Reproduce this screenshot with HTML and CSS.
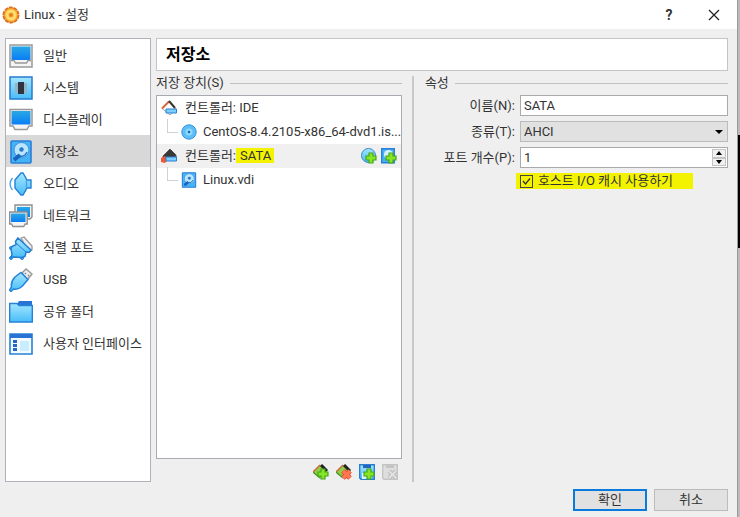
FILE: index.html
```html
<!DOCTYPE html>
<html lang="ko">
<head>
  <meta charset="UTF-8">
  <title>Linux - 설정</title>
  <link rel="stylesheet" href="styles.css">
</head>
<body>

<svg class="defs" width="0" height="0" aria-hidden="true">
  <defs>
    <linearGradient id="screen" x1="0" y1="0" x2="0" y2="1"><stop offset="0" stop-color="#28a8e6"/><stop offset="1" stop-color="#0a7df5"/></linearGradient>
    <linearGradient id="sky" x1="0" y1="0" x2="0" y2="1"><stop offset="0" stop-color="#a5e6ff"/><stop offset="1" stop-color="#48bdf8"/></linearGradient>
    <symbol id="plus" viewBox="0 0 12 12"><path d="M4 1h4v3h3v4H8v3H4V8H1V4h3z" fill="#86e626" stroke="#45a51c" stroke-width="1.2"/></symbol>
    <symbol id="disk" viewBox="0 0 24 24">
      <rect x="2" y="1" width="20" height="22" rx="1" fill="#45b4f6" stroke="#2b7fd6" stroke-width="1.6"/>
      <circle cx="12.500" cy="10" r="7.500" fill="#b9e6fc" stroke="#3a90e0"/>
      <circle cx="12.500" cy="9.500" r="2.200" fill="#2a78cc"/>
      <path d="M18 12q-2 5-7 4" fill="none" stroke="#2a78cc" stroke-width="1.500"/>
      <path d="M11 15l-6 5" fill="none" stroke="#1b62bd" stroke-width="4"/>
    </symbol>
  </defs>
</svg>

<div class="window">
  <header class="titlebar">
    <svg class="gear" viewBox="0 0 18 18">
      <circle cx="9" cy="9" r="7.500" fill="#f79a28" stroke="#d9701f" stroke-width="2" stroke-dasharray="3.900 .8"/>
      <circle cx="9" cy="9" r="6.700" fill="#fba930"/>
      <circle cx="9" cy="9" r="4" fill="none" stroke="#ffdc70" stroke-width="3"/>
      <circle cx="9" cy="9" r="1.800" fill="#e07c22"/>
    </svg>
    <h1 class="title">Linux - 설정</h1>
    <button class="title-btn" type="button" aria-label="도움말">?</button>
    <button class="title-btn" type="button" aria-label="닫기">
      <svg width="12" height="12" viewBox="0 0 12 12"><path d="M1 1l10 10M11 1L1 11" stroke="#222" stroke-width="1.300"/></svg>
    </button>
  </header>

  <div class="content">
    <nav class="sidebar">
      <a class="nav-item" href="#general">
        <svg class="nav-icon" viewBox="0 0 24 24"><path d="M1 1h22v22H1z" fill="#f4f4f4" stroke="#999" stroke-width="1.500"/><path d="M2.500 2.500h19V16h-19z" fill="url(#screen)"/><path d="M2 16.500h3l1.500 2.500h11l1.500-2.500h3" fill="none" stroke="#999" stroke-width="1.300"/></svg>
        일반</a>
      <a class="nav-item" href="#system">
        <svg class="nav-icon" viewBox="0 0 24 24"><path d="M1 1h22v22H1z" fill="url(#sky)" stroke="#267bd2" stroke-width="1.500"/><path d="M6 7h12v10H6z" fill="#91b5c6"/><path d="M9 6h6v12H9z" fill="#303440"/></svg>
        시스템</a>
      <a class="nav-item" href="#display">
        <svg class="nav-icon" viewBox="0 0 24 24"><path d="M1 1.500h22V18h-3l-2 3.500H6L4 18H1z" fill="#f4f4f4" stroke="#999" stroke-width="1.500"/><path d="M2.500 3h19v13.500h-19z" fill="url(#screen)"/></svg>
        디스플레이</a>
      <a class="nav-item selected" href="#storage">
        <svg class="nav-icon"><use href="#disk"/></svg>
        저장소</a>
      <a class="nav-item" href="#audio">
        <svg class="nav-icon" viewBox="0 0 24 24"><path d="M6 8l6-7h2l4 7h4v8h-4l-4 7h-2l-6-7z" fill="url(#sky)" stroke="#2583d7" stroke-width="1.400"/><path d="M17.500 8v8M3.500 6q-5 6 0 12" fill="none" stroke="#4a9fe4" stroke-width="1.300"/></svg>
        오디오</a>
      <a class="nav-item" href="#network">
        <svg class="nav-icon" viewBox="0 0 24 24"><path d="M6 1h17v12l-2 2H6z" fill="#f4f4f4" stroke="#8f8f8f" stroke-width="1.400"/><path d="M8 3h13v10H8z" fill="url(#screen)"/><path d="M.7 8h17.500v12h-2l-1.500 2.500H4L2.500 20H.7z" fill="#f4f4f4" stroke="#8f8f8f" stroke-width="1.400"/><path d="M2 9.500h14.500V18H2z" fill="url(#screen)"/></svg>
        네트워크</a>
      <a class="nav-item" href="#serial">
        <svg class="nav-icon" viewBox="0 0 24 24">
          <path d="M12 2l3-1 8 9v4l-3 2z" fill="#eee" stroke="#999" stroke-width="1.300"/>
          <g fill="#52bdf7" stroke="#227dd3"><circle cx="2" cy="12" r="1.500"/><circle cx="13" cy="22" r="1.500"/><circle cx="2" cy="22" r="1.500"/></g>
          <path d="M9 2l13 12-2 2.500-3-.5-1 4.500-3 1-8-.5-3 .5 1-3-1-6 1-2 4-2-.500-3z" fill="url(#sky)" stroke="#227dd3" stroke-width="1.500"/>
          <path d="M7 7l10 9" stroke="#227dd3"/>
        </svg>
        직렬 포트</a>
      <a class="nav-item" href="#usb">
        <svg class="nav-icon" viewBox="0 0 24 24"><path d="M13 5l4-4 6 5-5 6z" fill="#eee" stroke="#999" stroke-width="1.400"/><path d="M16 5l1 1M19 7l1 1" stroke="#888" stroke-width="1.500"/><path d="M12 4.500l7 7-6 7q-4 3.500-8.500 2.500L2 23.500.5 22 2.500 19Q1.500 14 6 9z" fill="url(#sky)" stroke="#2583d7" stroke-width="1.500"/></svg>
        USB</a>
      <a class="nav-item" href="#shared">
        <svg class="nav-icon" viewBox="0 0 24 24"><path d="M8 4l2-3h13v4H8z" fill="#2873d3"/><path d="M.7 3.500H8l2 2h13.300V22H.7z" fill="url(#sky)" stroke="#2583d7" stroke-width="1.400"/></svg>
        공유 폴더</a>
      <a class="nav-item" href="#ui">
        <svg class="nav-icon" viewBox="0 0 24 24"><path d="M1 2h22v20H1z" fill="#f3fbff" stroke="#2583d7" stroke-width="1.600"/><path d="M1 2h22v4H1z" fill="#2873d3"/><path d="M11 9h9v10h-9z" fill="#c9edfd"/><path d="M4 8h4v3H4zM4 12h4v3H4zM4 16h4v3H4z" fill="#2468c5"/></svg>
        사용자 인터페이스</a>
    </nav>

    <main class="main">
      <h2 class="page-title">저장소</h2>
      <div class="columns">
        <section class="devices">
          <h3 class="group-title">저장 장치(S)</h3>
          <ul class="tree">
            <li class="row">
              <svg class="icon" viewBox="0 0 16 16"><path d="M1 8.500L8 1l7 8-6 6z" fill="#fff" stroke="#aaa"/><path d="M1 8.500L8 1.500" stroke="#dd6236" stroke-width="2"/><path d="M8 1l6 7" stroke="#333" stroke-width="2"/><path d="M5 9h10.500v4H5z" fill="#7cd0ff" stroke="#287fd2"/></svg>
              컨트롤러: IDE
            </li>
            <li class="row child">
              <svg class="icon" viewBox="0 0 16 16"><circle cx="8" cy="8" r="7.200" fill="#5dbff8" stroke="#3291dc"/><circle cx="8" cy="8" r="3.500" fill="#90d9fd"/><circle cx="8" cy="8" r="1.300" fill="#1765b8"/></svg>
              CentOS-8.4.2105-x86_64-dvd1.is...
            </li>
            <li class="row active">
              <svg class="icon" viewBox="0 0 16 16"><path d="M2 8l7-7 6 6v3H2z" fill="#393939" stroke="#555"/><path d="M0 10l4-2 3 4-3 3-4-1z" fill="#ed593b"/><path d="M5 9h10.500v4H5z" fill="#7cd0ff" stroke="#287fd2"/></svg>
              <span>컨트롤러:<mark class="mark">SATA</mark></span>
              <span class="row-actions">
                <button class="icon-btn" type="button" aria-label="광학 드라이브 추가"><svg class="icon" viewBox="0 0 16 16"><circle cx="7.500" cy="7.500" r="7" fill="url(#sky)" stroke="#3388cc"/><use href="#plus" x="4" y="4" width="12" height="12"/></svg></button>
                <button class="icon-btn" type="button" aria-label="하드 디스크 추가"><svg class="icon" viewBox="0 0 16 16"><path d="M.7.7h12.600v14H.7z" fill="#45b4f6" stroke="#2b7fd6" stroke-width="1.400"/><circle cx="7.500" cy="6.500" r="4.500" fill="#d6f1ff"/><use href="#plus" x="4" y="4" width="12" height="12"/></svg></button>
              </span>
            </li>
            <li class="row child">
              <svg class="icon" viewBox="0 0 16 16"><use href="#disk" width="16" height="16"/></svg>
              Linux.vdi
            </li>
          </ul>
          <div class="toolbar">
            <button class="icon-btn" type="button" aria-label="컨트롤러 추가"><svg class="icon" viewBox="0 0 16 16"><path d="M0 8l7-7 7 7-6 6z" fill="#8fce4a"/><path d="M0 8l7-7" stroke="#c8693c" stroke-width="1.500"/><path d="M0 8l7 6" stroke="#4a9a22" stroke-width="1.500"/><path d="M8 1l6 6" stroke="#222" stroke-width="3"/><use href="#plus" x="4" y="4" width="12" height="12"/></svg></button>
            <button class="icon-btn" type="button" aria-label="컨트롤러 삭제"><svg class="icon" viewBox="0 0 16 16"><path d="M0 8l7-7 7 7-6 6z" fill="#8fce4a"/><path d="M0 8l7-7" stroke="#c8693c" stroke-width="1.500"/><path d="M0 8l7 6" stroke="#4a9a22" stroke-width="1.500"/><path d="M8 1l6 6" stroke="#222" stroke-width="3"/><path d="M7 7l7 7M14 7l-7 7" stroke="#d8492c" stroke-width="5"/><path d="M7 7l7 7M14 7l-7 7" stroke="#ff7650" stroke-width="3.500"/></svg></button>
            <button class="icon-btn" type="button" aria-label="연결 추가"><svg class="icon" viewBox="0 0 16 16"><path d="M.7.7h14.600v14.600H2L.7 14z" fill="url(#sky)" stroke="#287fd2" stroke-width="1.400"/><path d="M4 1h8v3H4z" fill="#2366bc"/><path d="M3 9h10v6H3z" fill="#ddf4ff"/><use href="#plus" x="4" y="4" width="12" height="12"/></svg></button>
            <button class="icon-btn" type="button" aria-label="연결 삭제" disabled><svg class="icon" viewBox="0 0 16 16"><path d="M.7.7h14.600v14.600H2L.7 14z" fill="#dedede" stroke="#c4c4c4" stroke-width="1.400"/><path d="M4 1h8v3H4z" fill="#c4c4c4"/><path d="M7 7l7 7M14 7l-7 7" stroke="#bbb" stroke-width="4"/><path d="M7 7l7 7M14 7l-7 7" stroke="#e2e2e2" stroke-width="2"/></svg></button>
          </div>
        </section>

        <section class="attributes">
          <h3 class="group-title">속성</h3>
          <form class="form">
            <label for="name">이름(N):</label>
            <input class="field" id="name" type="text" value="SATA">
            <label for="type">종류(T):</label>
            <select class="field select" id="type"><option>AHCI</option></select>
            <label for="ports">포트 개수(P):</label>
            <div class="field spin">
              <input class="spin-input" id="ports" type="text" inputmode="numeric" value="1">
              <div class="spin-btns">
                <button class="spin-btn" type="button" aria-label="증가"><svg width="6" height="4" viewBox="0 0 6 4"><path d="M0 4l3-4 3 4z"/></svg></button>
                <button class="spin-btn" type="button" aria-label="감소"><svg width="6" height="4" viewBox="0 0 6 4"><path d="M0 0l3 4 3-4z"/></svg></button>
              </div>
            </div>
            <label class="check"><input class="checkbox" type="checkbox" checked>호스트 I/O 캐시 사용하기</label>
          </form>
        </section>
      </div>
    </main>
  </div>

  <footer class="footer">
    <button class="btn primary" type="button">확인</button>
    <button class="btn" type="button">취소</button>
  </footer>
</div>
<div class="backdrop"></div>

</body>
</html>
```
FILE: styles.css
```css
* {
  box-sizing: border-box;
}
body {
  margin: 0;
  min-height: 100vh;
  display: flex;
  font: 13px/16px Roboto, "Noto Sans CJK KR", sans-serif;
  color: #333;
  background-color: #efefef;
}
h1, h2, h3, ul {
  margin: 0;
  padding: 0;
  font-size: 13px;
  font-weight: normal;
}
button, input, select {
  font: inherit;
  color: inherit;
}
.defs {
  position: absolute;
}
.window {
  flex: 1;
  min-width: 0;
  display: flex;
  flex-direction: column;
}
/* strip of the desktop behind the window */
.backdrop {
  width: 3px;
  border-left: 1px solid #999;
  background: linear-gradient(#bbb 135px, #000 135px, #000 248px, #bbb 248px);
}

.titlebar {
  display: flex;
  align-items: center;
  height: 29px;
  padding: 0 8px 0 2px;
  background-color: #fff;
}
.gear {
  width: 18px;
  height: 18px;
}
.title {
  flex: 1;
  padding-left: 4px;
}
.title-btn {
  width: 30px;
  margin-left: 15px;
  padding: 0;
  border: 0;
  background: none;
  font-size: 14px;
  font-weight: bold;
}
.title-btn svg {
  display: block;
  margin: 0 auto;
}

.content {
  flex: 1;
  display: flex;
  gap: 5px;
  padding: 9px 9px 0 5px;
}
.sidebar {
  width: 146px;
  border: 1px solid #b0b2bb;
  background-color: #fff;
}
.nav-item {
  display: flex;
  align-items: center;
  gap: 10px;
  height: 32px;
  padding: 1px 0 0 3px;
  color: inherit;
  text-decoration: none;
  white-space: nowrap;
}
.nav-item.selected {
  background-color: #d8d8d8;
}
.nav-icon {
  width: 24px;
  height: 24px;
  flex: none;
}

.main {
  flex: 1;
  min-width: 0;
  display: flex;
  flex-direction: column;
}
.page-title {
  height: 33px;
  padding: 0 9px;
  border: 1px solid #c4c4c4;
  background-color: #fff;
  color: #000;
  font-size: 16px;
  font-weight: bold;
  line-height: 31px;
}
.columns {
  flex: 1;
  display: flex;
  padding-top: 5px;
}
.devices {
  flex: 43 1 0;
  min-width: 0;
  display: flex;
  flex-direction: column;
  padding-right: 10px;
}
.attributes {
  flex: 53 1 0;
  min-width: 0;
  padding-left: 11px;
  border-left: 2px solid #c8c8c8;
}
.group-title {
  display: flex;
  align-items: center;
  gap: 6px;
  height: 14px;
  margin-bottom: 5px;
}
.group-title::after {
  content: "";
  flex: 1;
  border-top: 1px solid #c0c0c0;
}

.tree {
  flex: 1;
  border: 1px solid #a8abb4;
  background-color: #fff;
  list-style: none;
}
.row {
  display: flex;
  align-items: center;
  gap: 8px;
  height: 24px;
  padding: 0 4px;
  white-space: nowrap;
}
.row.active {
  background-color: #f0f0f0;
}
.child {
  gap: 6px;
  padding: 0 0 0 10px;
}
.child::before {
  content: "";
  flex: none;
  width: 10px;
  height: 13px;
  margin: 0 -3px 12px 0;
  border: solid #d0d0d0;
  border-width: 0 0 1px 1px;
}
.icon {
  display: block;
  width: 16px;
  height: 16px;
  flex: none;
}
.mark, .check {
  background-color: #f3f300;
  color: inherit;
}
.mark {
  padding: 0 3px 0 4px;
}
.row-actions {
  display: flex;
  gap: 4px;
  margin-left: auto;
}
.icon-btn {
  padding: 0;
  border: 0;
  background: none;
}
.toolbar {
  display: flex;
  justify-content: flex-end;
  gap: 7px;
  padding: 5px 4px 2px;
}

.form {
  display: grid;
  grid-template-columns: 90px 1fr;
  gap: 5px;
  align-items: center;
  text-align: right;
}
.field {
  width: 100%;
  min-width: 0;
  height: 21px;
  padding: 0 3px;
  border: 1px solid #aaa;
  border-radius: 0;
  background-color: #fff;
}
.select {
  appearance: none;
  border-color: #bbb;
  background: #e1e1e1 url("data:image/svg+xml,%3Csvg xmlns='http://www.w3.org/2000/svg' width='8' height='4'%3E%3Cpath d='M0 0h8L4 4z'/%3E%3C/svg%3E") no-repeat right 4px center;
}
.spin {
  display: flex;
  padding-right: 1px;
}
.spin-input {
  flex: 1;
  min-width: 0;
  padding: 0;
  border: 0;
  background: none;
}
.spin-btns {
  display: flex;
  flex-direction: column;
  width: 14px;
  padding: 1px 0;
}
.spin-btn {
  flex: 1;
  display: flex;
  align-items: center;
  justify-content: center;
  padding: 0;
  border: 1px solid #c4c4c4;
  background-color: #f0f0f0;
}
.check {
  grid-column: 2;
  justify-self: start;
  display: flex;
  align-items: center;
  gap: 5px;
  margin-left: -4px;
  padding: 0 20px 0 4px;
  white-space: nowrap;
}
.checkbox {
  appearance: none;
  width: 13px;
  height: 13px;
  margin: 0;
  border: 1px solid #444;
}
.checkbox:checked {
  background: url("data:image/svg+xml,%3Csvg xmlns='http://www.w3.org/2000/svg' viewBox='0 0 11 11'%3E%3Cpath d='M2 5l2.500 3L9 2.500' fill='none' stroke='%23333' stroke-width='1.200'/%3E%3C/svg%3E");
}

.footer {
  display: flex;
  justify-content: flex-end;
  gap: 7px;
  padding: 7px 9px 6px;
}
.btn {
  width: 74px;
  height: 22px;
  padding: 0;
  border: 1px solid #bbb;
  background-color: #e1e1e1;
}
.btn.primary {
  border: 2px solid #0a7bdc;
}
```
